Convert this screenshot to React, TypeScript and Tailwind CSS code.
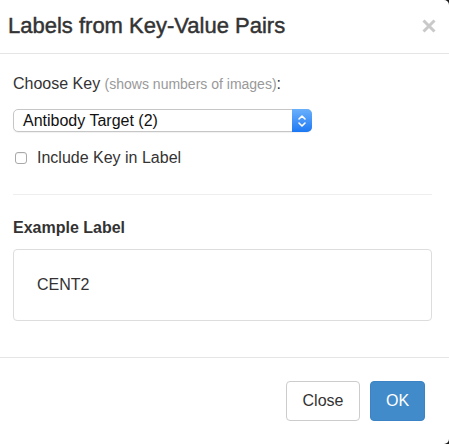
import React from "react";

const FONT = { fontFamily: '"Liberation Sans", Arial, sans-serif' };

function CloseX() {
  return (
    <svg width="14" height="14" viewBox="0 0 14 14" className="block">
      <path d="M1.5 1.5 L12.5 12.5 M12.5 1.5 L1.5 12.5" stroke="#c9c9c9" strokeWidth="3" strokeLinecap="butt" />
    </svg>
  );
}

function Stepper() {
  return (
    <svg width="10" height="14" viewBox="0 0 10 14" className="block">
      <path d="M2 5 L5 2 L8 5 M2 9 L5 12 L8 9" stroke="#fff" strokeWidth="1.6" fill="none" strokeLinecap="round" strokeLinejoin="round" />
    </svg>
  );
}

export default function App() {
  return (
    <div className="w-[449px] h-[444px] bg-[#1a1a1a] overflow-hidden" style={FONT}>
      <div className="w-[449px] h-[444px] bg-white rounded-tr-[5px] rounded-br-[5px] text-[#333]">
        {/* Header */}
        <div className="h-[54px] border-b border-[#e5e5e5] pl-[8px] pr-[13px] flex items-center justify-between">
          <h4 className="text-[22px] font-medium leading-[24px] text-[#333] -mt-[2px] [-webkit-text-stroke:0.45px_#333]">
            Labels from Key-Value Pairs
          </h4>
          <button className="-mt-[2px]">
            <CloseX />
          </button>
        </div>

        {/* Body */}
        <div className="h-[303px] pl-[13px] pr-[17px] text-[16px]">
          <div className="pt-[20px] leading-[20px]">
            Choose Key <span className="text-[14px] text-[#999]">(shows numbers of images)</span>:
          </div>

          <div className="mt-[15px] w-[299px] h-[23px] flex rounded-[5px] border border-[#c6c6c6] bg-white shadow-[0_1px_1px_rgba(0,0,0,0.06)]">
            <div className="flex-1 pl-[9px] leading-[21px] text-[16px] text-[#111]">Antibody Target (2)</div>
            <div className="w-[20px] -my-px -mr-px rounded-r-[5px] bg-gradient-to-b from-[#69b0fb] to-[#1b78f3] flex items-center justify-center">
              <Stepper />
            </div>
          </div>

          <label className="mt-[16px] flex items-center leading-[20px]">
            <span className="w-[12px] h-[12px] ml-[2px] rounded-[3px] border border-[#a9a9a9] bg-white shadow-[inset_0_1px_1px_rgba(0,0,0,0.06)]" />
            <span className="ml-[10px]">Include Key in Label</span>
          </label>

          <div className="mt-[26px] border-t border-[#eeeeee]" />

          <div className="mt-[23px] leading-[20px] font-bold">Example Label</div>

          <div className="mt-[11px] h-[72px] rounded-[4px] border border-[#dddddd] flex items-center pl-[23px]">
            CENT2
          </div>
        </div>

        {/* Footer */}
        <div className="border-t border-[#e5e5e5] pt-[23px] pr-[24px] flex justify-end gap-[10px]">
          <button className="w-[74px] h-[40px] rounded-[4px] border border-[#cccccc] bg-white text-[16px] text-[#333]">
            Close
          </button>
          <button className="w-[55px] h-[40px] rounded-[4px] border border-[#3b83c4] bg-[#428bca] text-[16px] text-white">
            OK
          </button>
        </div>
      </div>
    </div>
  );
}
